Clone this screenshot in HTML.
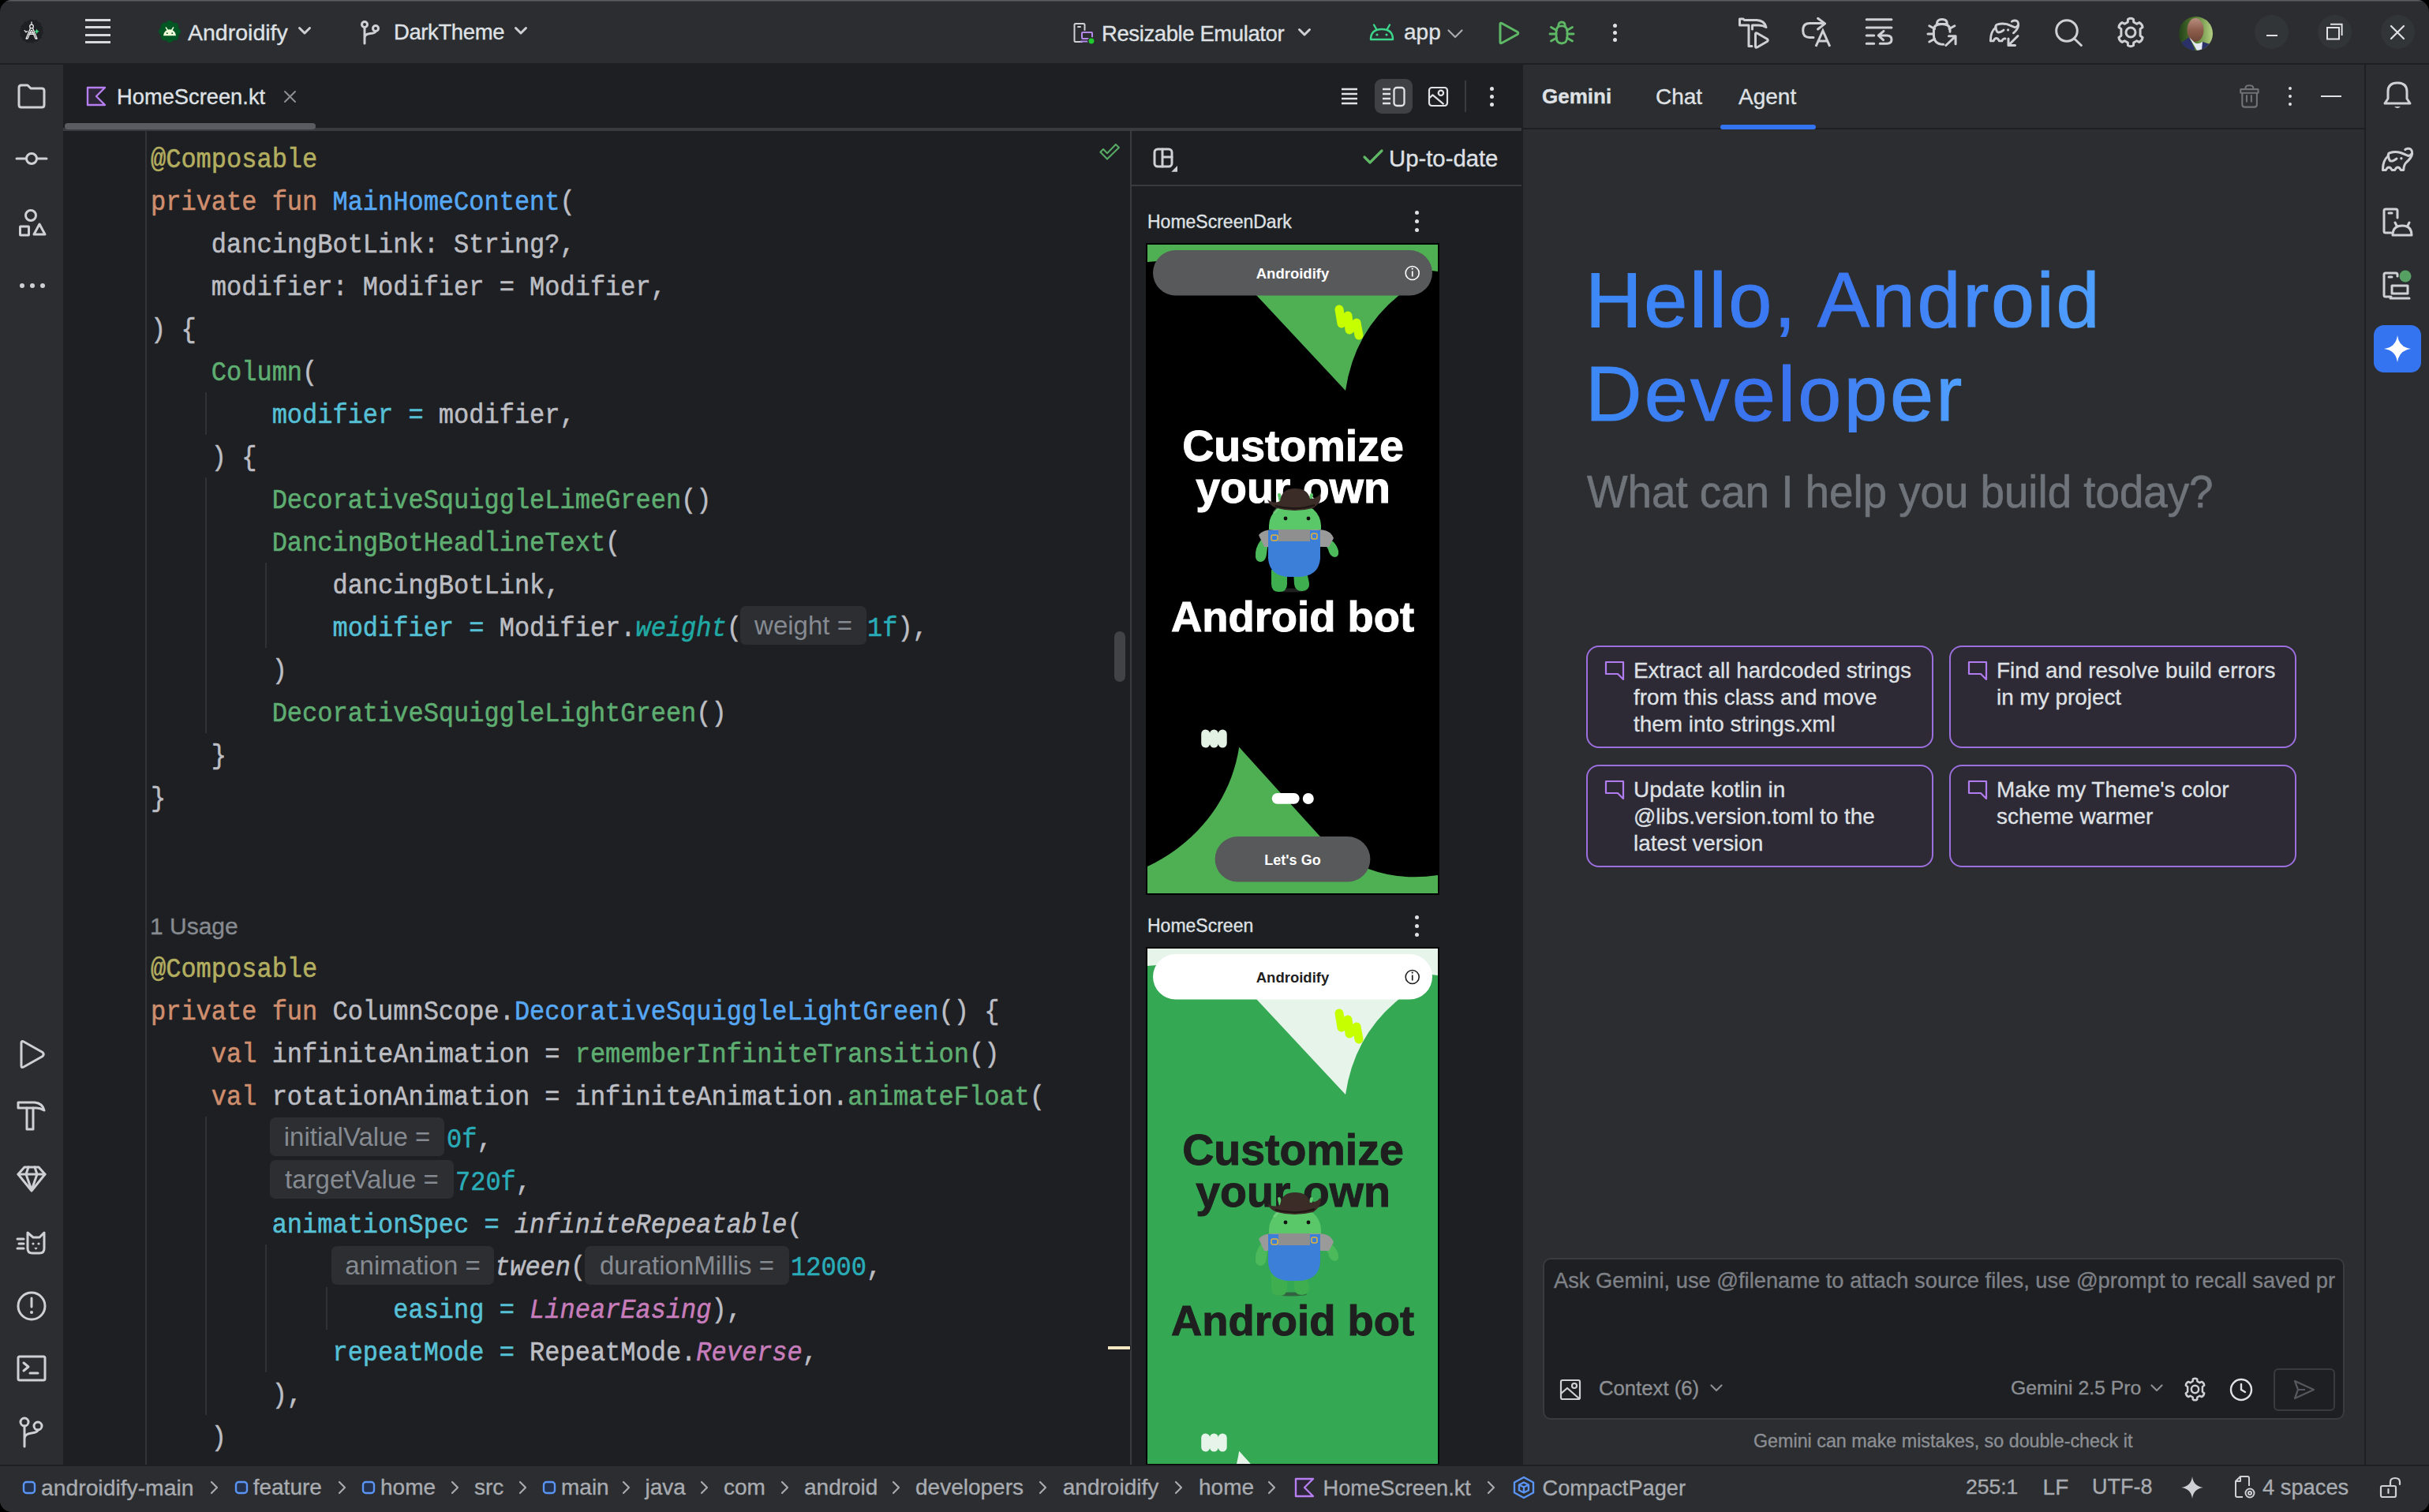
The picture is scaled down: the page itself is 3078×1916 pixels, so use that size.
<!DOCTYPE html>
<html><head><meta charset="utf-8">
<style>
html,body{margin:0;padding:0;background:#000;width:3078px;height:1916px;overflow:hidden}
*{box-sizing:border-box}
.win{position:absolute;left:0;top:0;width:3078px;height:1916px;border-radius:15px;overflow:hidden;background:#2B2D30;font-family:"Liberation Sans",sans-serif;color:#DFE1E5}
.a{position:absolute}
.t{position:absolute;white-space:pre;line-height:1;-webkit-text-stroke:0.35px currentColor}
svg{position:absolute;overflow:visible}
.ic{fill:none;stroke:#CED0D6;stroke-width:3;stroke-linecap:round;stroke-linejoin:round}
.code{position:absolute;left:191px;top:0;font-family:"Liberation Mono",monospace;font-size:32px;color:#BCBEC4;white-space:pre}
.ln{position:absolute;left:0;height:54px;line-height:54px;transform:translateY(4px) scaleY(1.12);transform-origin:0 34px;-webkit-text-stroke:0.5px currentColor}
.an{color:#B3AE60}.kw{color:#CF8E6D}.fd{color:#56A8F5}.cc{color:#5EAE72}.na{color:#56C1D6}.nu{color:#2AACB8}.ex{color:#20A9A4;font-style:italic}.it{font-style:italic}.pk{color:#C77DBB;font-style:italic}
.hint{position:absolute;height:49px;border-radius:7px;background:#2C2E32;color:#868A91;font-family:"Liberation Sans",sans-serif;font-size:33px;line-height:49px;text-align:center;white-space:pre}
.guide{position:absolute;width:2px;background:#2F3134}
</style></head><body>
<div class="win">
<!-- top border highlight -->
<div class="a" style="left:0;top:0;width:3078px;height:1px;background:#5C5D60"></div><div class="a" style="left:0;top:1px;width:3078px;height:1px;background:#46474B"></div>

<!-- ================= TITLE BAR ================= -->
<!-- app icon -->
<svg style="left:24px;top:24px" width="32" height="32" viewBox="0 0 32 32"><path d="M16 0.5 L19 1.6 L22.5 1.3 L24.5 4 L27.7 5.2 L28.3 8.6 L30.6 11.2 L29.8 14.5 L31 17.8 L29 20.5 L28.8 24 L25.7 25.5 L23.8 28.4 L20.3 28.6 L17.4 30.8 L14.2 29.8 L10.8 30.6 L8.4 28.2 L5 27.3 L4 24 L1.5 21.6 L2 18.2 L0.6 15 L2.5 12.2 L2.5 8.7 L5.4 6.9 L6.9 3.8 L10.3 3.3 L13 1 Z" fill="#1F2023"/><g fill="none" stroke="#ECECEC" stroke-width="1.3" stroke-linejoin="round" stroke-linecap="round"><path d="M16 4 L16 7"/><circle cx="16" cy="9.5" r="2.3"/><path d="M14.6 11.6 L9 25 L11 25 L15.5 14.5 M17.4 11.6 L23 25 L21 25 L16.5 14.5"/><path d="M13.6 17.6 L18.4 17.6 M13 19.4 L19 19.4"/><path d="M7.2 14.6 L9 16.8 L10.6 15.6"/></g><path d="M22.6 12.5 L23.6 14.8 L25.9 15.8 L23.6 16.8 L22.6 19.2 L21.6 16.8 L19.3 15.8 L21.6 14.8 Z" fill="#3DDC84"/></svg>
<!-- hamburger -->
<div class="a" style="left:108px;top:24px;width:32px;height:3px;background:#D6D8DC"></div>
<div class="a" style="left:108px;top:33px;width:32px;height:3px;background:#D6D8DC"></div>
<div class="a" style="left:108px;top:43px;width:32px;height:3px;background:#D6D8DC"></div>
<div class="a" style="left:108px;top:52px;width:32px;height:3px;background:#D6D8DC"></div>
<!-- project icon -->
<svg style="left:201px;top:25.5px" width="28" height="28" viewBox="0 0 28 28"><g fill="#025623"><circle cx="14" cy="14" r="11.3"/><circle cx="14.00" cy="4.70" r="4.7"/><circle cx="20.58" cy="7.42" r="4.7"/><circle cx="23.30" cy="14.00" r="4.7"/><circle cx="20.58" cy="20.58" r="4.7"/><circle cx="14.00" cy="23.30" r="4.7"/><circle cx="7.42" cy="20.58" r="4.7"/><circle cx="4.70" cy="14.00" r="4.7"/><circle cx="7.42" cy="7.42" r="4.7"/></g><path d="M6 19.3 A8 8 0 0 1 22 19.3 Z" fill="#EEFBD8"/><path d="M9.4 9 L11.4 12.4 M18.6 9 L16.6 12.4" stroke="#EEFBD8" stroke-width="1.5" stroke-linecap="round"/><circle cx="10.8" cy="16.2" r="0.9" fill="#025623"/><circle cx="17.2" cy="16.2" r="0.9" fill="#025623"/></svg>
<div class="t" style="left:238px;top:26.5px;font-size:28.5px;color:#DFE1E5">Androidify</div>
<svg style="left:378px;top:34px" width="16" height="10" viewBox="0 0 16 10"><path d="M1.5 1.5 L8 8 L14.5 1.5" class="ic" stroke-width="2.2"/></svg>
<!-- branch icon -->
<svg style="left:457px;top:26px" width="24" height="30" viewBox="0 0 24 30"><g class="ic" stroke-width="2.2"><circle cx="5" cy="5" r="3.5"/><circle cx="19" cy="10" r="3.5"/><path d="M5 8.5 L5 29 M5 22 Q5 17 12 16.5 Q19 16 19 13.5"/></g></svg>
<div class="t" style="left:499px;top:27px;font-size:27.5px;letter-spacing:-0.4px;color:#DFE1E5">DarkTheme</div>
<svg style="left:652px;top:34px" width="16" height="10" viewBox="0 0 16 10"><path d="M1.5 1.5 L8 8 L14.5 1.5" class="ic" stroke-width="2.2"/></svg>

<!-- device selector -->
<svg style="left:1360px;top:28px" width="28" height="30" viewBox="0 0 28 30"><g fill="none" stroke="#CED0D6" stroke-width="2" stroke-linecap="round" stroke-linejoin="round"><path d="M11 25 L3 25 Q1.5 25 1.5 23.5 L1.5 3.5 Q1.5 2 3 2 L13 2 Q14.5 2 14.5 3.5 L14.5 10"/><path d="M6 6 L9 6"/></g><g fill="none" stroke="#B589EC" stroke-width="2" stroke-linejoin="round"><rect x="11" y="13" width="13" height="8" rx="1"/><path d="M9 24.5 L26 24.5"/></g><circle cx="23" cy="24" r="4.2" fill="#1FCB2E" stroke="#2B2D30" stroke-width="1.5"/></svg>
<div class="t" style="left:1396px;top:28.5px;font-size:27.5px;letter-spacing:-0.4px;color:#DFE1E5">Resizable Emulator</div>
<svg style="left:1645px;top:36px" width="16" height="10" viewBox="0 0 16 10"><path d="M1.5 1.5 L8 8 L14.5 1.5" class="ic" stroke-width="2.2"/></svg>
<svg style="left:1735px;top:30px" width="32" height="22" viewBox="0 0 32 22"><g fill="none" stroke="#3DD68C" stroke-width="2.4" stroke-linecap="round" stroke-linejoin="round"><path d="M2 20 Q2 7 16 7 Q30 7 30 20 Z"/><path d="M6 1.5 L9.5 7.5 M26 1.5 L22.5 7.5"/></g><circle cx="10" cy="14" r="1.6" fill="#3DD68C"/><circle cx="22" cy="14" r="1.6" fill="#3DD68C"/></svg>
<div class="t" style="left:1779px;top:27px;font-size:28px;color:#DFE1E5">app</div>
<svg style="left:1834px;top:37px" width="20" height="12" viewBox="0 0 20 12"><path d="M1.5 1.5 L10 10 L18.5 1.5" fill="none" stroke="#A8ABB0" stroke-width="2.2" stroke-linecap="round" stroke-linejoin="round"/></svg>
<!-- run -->
<svg style="left:1898px;top:27px" width="28" height="30" viewBox="0 0 28 30"><path d="M3 3.5 Q3 1.5 5 2.5 L25 13.5 Q26.5 15 25 16.5 L5 27.5 Q3 28.5 3 26.5 Z" fill="none" stroke="#5FB865" stroke-width="3" stroke-linejoin="round"/></svg>
<!-- debug -->
<svg style="left:1962px;top:26px" width="34" height="32" viewBox="0 0 34 32"><g fill="none" stroke="#5FB865" stroke-width="2.8" stroke-linecap="round" stroke-linejoin="round"><path d="M12.8 6.8 Q12.8 2 17 2 Q21.2 2 21.2 6.8"/><path d="M10 14 Q10 6.8 17 6.8 Q24 6.8 24 14 L24 20 Q24 29 17 29 Q10 29 10 20 Z"/><path d="M10 17 L2 17 M24 17 L32 17 M10.5 12.5 L3.5 8.5 M23.5 12.5 L30.5 8.5 M10.5 22 L3.5 26 M23.5 22 L30.5 26"/></g></svg>
<!-- more -->
<div class="a" style="left:2043.5px;top:29.5px;width:5px;height:5px;border-radius:50%;background:#DFE1E5"></div>
<div class="a" style="left:2043.5px;top:38.5px;width:5px;height:5px;border-radius:50%;background:#DFE1E5"></div>
<div class="a" style="left:2043.5px;top:47.5px;width:5px;height:5px;border-radius:50%;background:#DFE1E5"></div>

<!-- right icons -->
<svg style="left:2203px;top:22px" width="40" height="40" viewBox="0 0 40 40"><g class="ic" stroke-width="3.2"><path d="M13 10 L1.5 10 L1.5 2 L6 2 L7.5 3.5 L23 3.5 Q33 4 35 12.5 Q30 9.5 24 10 L17.5 10 L17.5 15 M13 10 L13 36.5 L17 36.5"/><path d="M21.5 21 Q21.5 19 23.5 20 L36.5 27.5 Q38 29 36.5 30.5 L23.5 38 Q21.5 39 21.5 37 Z"/></g></svg>
<svg style="left:2283px;top:22px" width="40" height="40" viewBox="0 0 40 40"><g class="ic" stroke-width="3.2"><path d="M15 25.4 L10 25.4 Q1.7 25.4 1.7 16.4 Q1.7 7.4 10 7.4 L29 7.4 M20.6 1.3 L29.6 7.9 L20.6 15"/><path d="M18 36.8 L26.9 16.9 L35.8 36.8 M21 30 L32.8 30" stroke-linecap="butt" stroke-linejoin="miter"/></g></svg>
<svg style="left:2363px;top:22px" width="40" height="40" viewBox="0 0 40 40"><g class="ic" stroke-width="3.2"><path d="M2.2 2.7 L33.9 2.7 M2.2 13 L33.9 13 M2.2 23 L11.7 23 M2.2 33.3 L11.7 33.3"/><path d="M19.2 33.3 L28 33.3 Q34 33.3 34 28 Q34 23 28 23 L17.3 23 M24 17.4 L17.3 23 L23.5 28.7"/></g></svg>
<svg style="left:2441px;top:22px" width="40" height="40" viewBox="0 0 40 40"><g class="ic" stroke-width="3.2"><path d="M13.3 8.4 Q13.3 2.6 19.9 2.6 Q26.4 2.6 26.4 8.4 Z"/><path d="M21.7 34.3 Q9.4 34.3 9.4 22 L9.4 16 Q9.4 8.4 19.9 8.4 Q30 8.4 30 16 L30 18.3"/><path d="M3.8 10.8 L10.6 14.5 M2 21 L8.8 21 M3.8 31 L10.6 27.3 M29.1 14.5 L35.9 10.8"/><path d="M24.8 35.5 L37.1 23.8 M28.5 23.8 L37.1 23.8 L37.1 33.7"/></g></svg>
<svg style="left:2520px;top:18px" width="42" height="44" viewBox="0 0 42 44"><g class="ic" stroke-width="3.3" transform="translate(1,2) scale(0.95)"><path d="M1.6 33.5 L5.4 33.5 Q7 30 9.2 30 Q11.4 30 13 33.5 L16.7 33.5 Q18.3 30 21 30.5"/><path d="M29.8 7.6 Q31 6.5 33.6 6.3 Q39 6 38.6 13 Q38 18 32 23"/><path d="M1.6 33.5 Q1 22 8.3 15.5 Q8 12 11 11.5 Q17 9.5 24 11.5 Q29 13.5 33.5 15.3 Q36 15.8 37.8 13"/><path d="M8.3 14.5 Q9 20 10.5 21.5 Q13 23.5 19 19"/></g><circle cx="24.6" cy="19.9" r="1.6" fill="#CED0D6"/><g class="ic" stroke-width="3.2"><path d="M25 39.5 L37 27.5 M25 31 L25 39.5 L33.5 39.5"/></g></svg>
<svg style="left:2603px;top:23px" width="40" height="40" viewBox="0 0 40 40"><g class="ic" stroke-width="3.2"><circle cx="16" cy="16" r="13.3"/><path d="M25.5 26 L34.4 34.5"/></g></svg>
<svg style="left:2680px;top:21px" width="40" height="40" viewBox="0 0 40 40"><g class="ic" stroke-width="3.2"><path d="M23.7 7 L23.5 3.4 Q20 1 16.5 3.4 L16.3 7 L12.3 9.3 L9.1 7.6 Q5.3 9.4 4.9 13.6 L7.9 15.7 L7.9 24.3 L4.9 26.4 Q5.3 30.6 9.1 32.4 L12.3 30.7 L16.3 33 L16.5 36.6 Q20 39 23.5 36.6 L23.7 33 L27.7 30.7 L30.9 32.4 Q34.7 30.6 35.1 26.4 L32.1 24.3 L32.1 15.7 L35.1 13.6 Q34.7 9.4 30.9 7.6 L27.7 9.3 Z"/><circle cx="20" cy="20" r="6"/></g></svg>
<!-- avatar -->
<svg style="left:2761px;top:21px" width="43" height="43" viewBox="0 0 43 43"><defs><clipPath id="avc"><circle cx="21.5" cy="21.5" r="21.5"/></clipPath><linearGradient id="avbg" x1="0" x2="1"><stop offset="0" stop-color="#24401A"/><stop offset="0.45" stop-color="#4F7A2E"/><stop offset="1" stop-color="#B5D083"/></linearGradient><linearGradient id="avface" x1="0" y1="0" x2="0" y2="1"><stop offset="0" stop-color="#B88E80"/><stop offset="0.5" stop-color="#8E5E4C"/><stop offset="1" stop-color="#6E4536"/></linearGradient></defs><g clip-path="url(#avc)"><rect x="0" y="0" width="43" height="43" fill="url(#avbg)"/><ellipse cx="21" cy="17" rx="10.5" ry="15" fill="url(#avface)"/><path d="M0 35 Q8 30 13 26 L21 43 L0 43 Z" fill="#2B3068"/><path d="M30 32 L43 36 L43 43 L25 43 Z" fill="#2B3068"/><path d="M13 26 L23 43 L29 43 L30 32 Q24 36 20 33 Z" fill="#E4E8F2"/></g></svg>
<!-- window buttons -->
<div class="a" style="left:2857px;top:19px;width:43px;height:43px;border-radius:50%;background:#323537"></div>
<div class="a" style="left:2872px;top:44px;width:14px;height:2px;background:#DFE1E5"></div>
<div class="a" style="left:2937px;top:19px;width:43px;height:43px;border-radius:50%;background:#323537"></div>
<svg style="left:2947px;top:29px" width="24" height="24" viewBox="0 0 24 24"><g fill="none" stroke="#DFE1E5" stroke-width="2"><rect x="2" y="6" width="15" height="14.5"/><path d="M6 1.8 L20.6 1.8 L20.6 16"/></g></svg>
<div class="a" style="left:3017px;top:19px;width:43px;height:43px;border-radius:50%;background:#323537"></div>
<svg style="left:3027px;top:30px" width="22" height="22" viewBox="0 0 22 22"><path d="M3 3 L19 19 M19 3 L3 19" stroke="#DFE1E5" stroke-width="2.2" stroke-linecap="round"/></svg>


<!-- ================= LEFT TOOLBAR ================= -->
<div class="a" style="left:0;top:82px;width:80px;height:1775px;background:#2B2D30"></div>
<!-- folder -->
<svg style="left:20px;top:102px" width="40" height="40" viewBox="0 0 40 40"><path d="M4 9 Q4 6 7 6 L15 6 L19 10 L33 10 Q36 10 36 13 L36 31 Q36 34 33 34 L7 34 Q4 34 4 31 Z" class="ic" stroke-width="3"/></svg>
<!-- commit -->
<svg style="left:20px;top:181px" width="40" height="40" viewBox="0 0 40 40"><g class="ic" stroke-width="3"><circle cx="20" cy="20" r="6.5"/><path d="M1 20 L13.5 20 M26.5 20 L39 20"/></g></svg>
<!-- structure -->
<svg style="left:21px;top:264px" width="40" height="40" viewBox="0 0 40 40"><g class="ic" stroke-width="3"><circle cx="18" cy="9" r="6.5"/><rect x="4.5" y="23" width="11" height="11" rx="0.5"/><path d="M29 20 L36 33 L22 33 Z"/></g></svg>
<!-- more -->
<div class="a" style="left:24.5px;top:359px;width:6px;height:6px;border-radius:50%;background:#CED0D6"></div>
<div class="a" style="left:37.5px;top:359px;width:6px;height:6px;border-radius:50%;background:#CED0D6"></div>
<div class="a" style="left:50.5px;top:359px;width:6px;height:6px;border-radius:50%;background:#CED0D6"></div>
<!-- bottom icons -->
<svg style="left:20px;top:1316px" width="40" height="40" viewBox="0 0 40 40"><path d="M7 5.5 Q7 2.5 10 4 L34 17.5 Q36.5 20 34 22.5 L10 36 Q7 37.5 7 34.5 Z" class="ic" stroke-width="3"/></svg>
<svg style="left:20px;top:1395px" width="40" height="40" viewBox="0 0 40 40"><g class="ic" stroke-width="3"><path d="M3 2 L24 2 Q34 3 36 12 Q31 9 26 9 L3 9 Z"/><path d="M14 9 L14 36 L22 36 L22 9"/></g></svg>
<svg style="left:20px;top:1474px" width="40" height="40" viewBox="0 0 40 40"><g class="ic" stroke-width="3"><path d="M11 5 L29 5 L37 14 L20 35 L3 14 Z"/><path d="M3 14 L37 14 M13 14 L20 34 L27 14 M13 14 L16 5 M27 14 L24 5"/></g></svg>
<svg style="left:20px;top:1556px" width="40" height="40" viewBox="0 0 40 40"><g class="ic" stroke-width="3"><path d="M15 6 L22 12 L30 12 L36 6 L36 26 Q36 32 30 32 L21 32 Q15 32 15 26 Z"/><path d="M2 14 L10 14 M4 20 L10 20 M2 26 L10 26"/></g><circle cx="22" cy="20" r="1.6" fill="#CED0D6"/><circle cx="29" cy="20" r="1.6" fill="#CED0D6"/><path d="M24 25 L25.5 26.5 L27 25" stroke="#CED0D6" stroke-width="1.6" fill="none"/></svg>
<svg style="left:20px;top:1635px" width="40" height="40" viewBox="0 0 40 40"><g class="ic" stroke-width="3"><circle cx="20" cy="20" r="17"/><path d="M20 10 L20 21"/></g><circle cx="20" cy="28" r="2" fill="#CED0D6"/></svg>
<svg style="left:20px;top:1715px" width="40" height="40" viewBox="0 0 40 40"><g class="ic" stroke-width="3"><rect x="3" y="4" width="34" height="30" rx="2"/><path d="M10 12 L16 17 L10 22 M18 25 L28 25"/></g></svg>
<svg style="left:20px;top:1795px" width="40" height="40" viewBox="0 0 40 40"><g class="ic" stroke-width="3"><circle cx="11" cy="7" r="5"/><circle cx="28" cy="12" r="5"/><path d="M11 12 L11 38 M11 28 Q11 22 20 21 Q28 20 28 17"/></g></svg>


<!-- ================= EDITOR ================= -->
<div class="a" style="left:80px;top:82px;width:1850px;height:1775px;background:#1E1F22"></div>
<div class="a" style="left:80px;top:162px;width:1848px;height:4px;background:#393B40"></div>
<div class="a" style="left:82px;top:156px;width:318px;height:8px;border-radius:4px;background:#5A5C62"></div>
<svg style="left:109px;top:109px" width="26" height="26" viewBox="0 0 26 26"><path d="M2 2 L24 2 L13 13 L24 24 L2 24 Z" fill="#2D2638" stroke="#B67EF0" stroke-width="2.4" stroke-linejoin="round"/></svg>
<div class="t" style="left:148px;top:109px;font-size:27.3px;color:#DFE1E5">HomeScreen.kt</div>
<svg style="left:359px;top:114px" width="17" height="17" viewBox="0 0 17 17"><path d="M2 2 L15 15 M15 2 L2 15" stroke="#8C8F94" stroke-width="2" stroke-linecap="round"/></svg>
<!-- toolbar right in tab bar -->
<svg style="left:1690px;top:100px" width="40" height="40" viewBox="0 0 40 40"><path d="M10 13 L30 13 M10 19 L30 19 M10 25 L30 25 M10 31 L30 31" stroke="#DFE1E5" stroke-width="2.3"/></svg>
<div class="a" style="left:1742px;top:100px;width:48px;height:44px;border-radius:9px;background:#404144"></div>
<svg style="left:1742px;top:100px" width="48" height="44" viewBox="0 0 48 44"><g stroke="#DFE1E5" stroke-width="2.3" fill="none"><path d="M10 13 L20 13 M10 19 L20 19 M10 25 L20 25 M10 31 L20 31"/><rect x="24.5" y="11" width="13" height="23" rx="3.5"/></g></svg>
<svg style="left:1802px;top:102px" width="40" height="40" viewBox="0 0 40 40"><g fill="none" stroke="#DFE1E5" stroke-width="2.2" stroke-linejoin="round"><rect x="9" y="9" width="23" height="23" rx="3.5"/><path d="M9.5 22 L13.5 18.4 L27.5 30.1"/><circle cx="23.9" cy="15.8" r="3.2"/></g></svg>
<div class="a" style="left:1856px;top:102px;width:2px;height:40px;background:#393B40"></div>
<div class="a" style="left:1887.5px;top:109.5px;width:5px;height:5px;border-radius:50%;background:#DFE1E5"></div>
<div class="a" style="left:1887.5px;top:119.5px;width:5px;height:5px;border-radius:50%;background:#DFE1E5"></div>
<div class="a" style="left:1887.5px;top:129.5px;width:5px;height:5px;border-radius:50%;background:#DFE1E5"></div>


<div class="a" style="left:184px;top:166px;width:2px;height:1691px;background:#313337"></div>
<div class="a" style="left:1432px;top:166px;width:2px;height:1691px;background:#393B40"></div>
<div class="code">
<div class="ln" style="top:173px"><span class="an">@Composable</span></div>
<div class="ln" style="top:227px"><span class="kw">private fun </span><span class="fd">MainHomeContent</span>(</div>
<div class="ln" style="top:281px">    dancingBotLink: String?,</div>
<div class="ln" style="top:335px">    modifier: Modifier = Modifier,</div>
<div class="ln" style="top:389px">) {</div>
<div class="ln" style="top:443px">    <span class="cc">Column</span>(</div>
<div class="ln" style="top:497px">        <span class="na">modifier =</span> modifier,</div>
<div class="ln" style="top:551px">    ) {</div>
<div class="ln" style="top:605px">        <span class="cc">DecorativeSquiggleLimeGreen</span>()</div>
<div class="ln" style="top:659px">        <span class="cc">DancingBotHeadlineText</span>(</div>
<div class="ln" style="top:713px">            dancingBotLink,</div>
<div class="ln" style="top:767px">            <span class="na">modifier =</span> Modifier.<span class="ex">weight</span>(</div>
<div class="ln" style="top:821px">        )</div>
<div class="ln" style="top:875px">        <span class="cc">DecorativeSquiggleLightGreen</span>()</div>
<div class="ln" style="top:929px">    }</div>
<div class="ln" style="top:983px">}</div>
<div class="ln" style="top:1199px"><span class="an">@Composable</span></div>
<div class="ln" style="top:1253px"><span class="kw">private fun </span>ColumnScope.<span class="fd">DecorativeSquiggleLightGreen</span>() {</div>
<div class="ln" style="top:1307px">    <span class="kw">val </span>infiniteAnimation = <span class="cc">rememberInfiniteTransition</span>()</div>
<div class="ln" style="top:1361px">    <span class="kw">val </span>rotationAnimation = infiniteAnimation.<span class="cc">animateFloat</span>(</div>
<div class="ln" style="top:1415px;left:375px"><span class="nu">0f</span>,</div>
<div class="ln" style="top:1469px;left:386px"><span class="nu">720f</span>,</div>
<div class="ln" style="top:1523px">        <span class="na">animationSpec =</span> <span class="it">infiniteRepeatable</span>(</div>
<div class="ln" style="top:1577px;left:436px"><span class="it">tween</span>(</div>
<div class="ln" style="top:1577px;left:811px"><span class="nu">12000</span>,</div>
<div class="ln" style="top:1631px">                <span class="na">easing =</span> <span class="pk">LinearEasing</span>),</div>
<div class="ln" style="top:1685px">            <span class="na">repeatMode =</span> RepeatMode.<span class="pk">Reverse</span>,</div>
<div class="ln" style="top:1739px">        ),</div>
<div class="ln" style="top:1793px">    )</div>
</div>
<div class="ln code" style="top:767px;left:1099px"><span class="nu">1f</span>),</div>
<div class="t" style="left:190px;top:1159px;font-size:30px;color:#868A91">1 Usage</div>
<div class="hint" style="left:938px;top:768px;width:160px">weight =</div>
<div class="hint" style="left:342px;top:1416px;width:221px">initialValue =</div>
<div class="hint" style="left:342px;top:1470px;width:233px">targetValue =</div>
<div class="hint" style="left:420px;top:1579px;width:206px">animation =</div>
<div class="hint" style="left:741px;top:1579px;width:259px">durationMillis =</div>
<div class="guide" style="left:260px;top:497px;height:54px"></div>
<div class="guide" style="left:260px;top:605px;height:324px"></div>
<div class="guide" style="left:336px;top:713px;height:108px"></div>
<div class="guide" style="left:260px;top:1415px;height:378px"></div>
<div class="guide" style="left:336px;top:1577px;height:162px"></div>
<div class="guide" style="left:413px;top:1631px;height:54px"></div>
<div class="a" style="left:1412px;top:800px;width:14px;height:64px;border-radius:7px;background:#424347"></div>
<div class="a" style="left:1403px;top:1705px;width:30px;height:6px;background:#1a1a1a"></div>
<div class="a" style="left:1404px;top:1706px;width:28px;height:4px;background:#F5E6C3"></div>
<svg style="left:1390px;top:178px" width="34" height="30" viewBox="0 0 34 30"><path d="M4.4 14.7 L8.1 11 L13 16.2 L23.9 5.1 L27.9 9 L13 23.6 Z" fill="none" stroke="#57A864" stroke-width="2.1" stroke-linejoin="round"/></svg>


<!-- ================= PREVIEW ================= -->

<!--PREVIEW_START-->
<!-- preview toolbar -->
<svg style="left:1460px;top:185px" width="36" height="36" viewBox="0 0 36 36"><g class="ic" stroke-width="2.2"><rect x="3" y="4" width="22" height="22" rx="4"/><path d="M13 4 L13 26 M13 14 L25 14"/></g><path d="M24.3 32.7 L32 32.7 L32 25 Z" fill="#CED0D6"/></svg>
<svg style="left:1727px;top:188px" width="26" height="22" viewBox="0 0 26 22"><path d="M2 11 L9 18 L24 3" fill="none" stroke="#5FB865" stroke-width="3.2" stroke-linecap="round" stroke-linejoin="round"/></svg>
<div class="t" style="left:1760px;top:186px;font-size:29.3px;color:#DFE1E5">Up-to-date</div>
<div class="a" style="left:1434px;top:234px;width:494px;height:2px;background:#393B40"></div>
<div class="t" style="left:1454px;top:270px;font-size:23px;color:#DFE1E5">HomeScreenDark</div>
<div class="a" style="left:1793px;top:267px;width:5px;height:5px;border-radius:50%;background:#DFE1E5"></div>
<div class="a" style="left:1793px;top:278px;width:5px;height:5px;border-radius:50%;background:#DFE1E5"></div>
<div class="a" style="left:1793px;top:289px;width:5px;height:5px;border-radius:50%;background:#DFE1E5"></div>
<div class="a" style="left:1452px;top:308px;width:372px;height:826px;background:#000"></div>
<div class="a" style="left:1454px;top:310px;width:368px;height:822px"><svg width="368" height="822" viewBox="0 0 368 822" style="position:absolute;left:0;top:0">
<defs><clipPath id="c1"><rect x="0" y="0" width="368" height="822"/></clipPath></defs>
<g clip-path="url(#c1)">
<rect x="0" y="0" width="368" height="822" fill="#000000"/>
<path d="M0 0 L368 0 L368 34 Q200 14 70 18 Q30 19 0 22 Z" fill="#4FAF53"/>
<path d="M110 34 L319 34 L319 64 Q262 110 251 185 Z" fill="#4FAF53"/>
<path d="M243 82 L246 100 L254 90 L256 108 L265 99 L268 115" fill="none" stroke="#C6FF00" stroke-width="11" stroke-linecap="round" stroke-linejoin="round"/>
<path d="M73.7 620 L73.7 632 M84.4 620 L84.4 632 M95.2 620 L95.2 632" stroke="#E3F1E5" stroke-width="11" stroke-linecap="round"/>
<path d="M0 788 C48 766 104 716 116.2 636.8 L218.4 749.6 L280 791 Q320 806 368 799 L368 822 L0 822 Z" fill="#4FAF53"/>
<rect x="7" y="7" width="354" height="57.5" rx="28.75" fill="#58595B"/>
<text x="184" y="42.5" text-anchor="middle" font-family="Liberation Sans" font-weight="700" font-size="18.5" fill="#FFFFFF">Androidify</text>
<circle cx="335.7" cy="36" r="8.5" fill="none" stroke="#FFFFFF" stroke-width="1.6"/>
<rect x="334.9" y="33.5" width="1.7" height="7" fill="#FFFFFF"/><circle cx="335.7" cy="30.6" r="1.1" fill="#FFFFFF"/>
<text x="184.5" y="273.5" text-anchor="middle" font-family="Liberation Sans" font-weight="700" font-size="55.5" fill="#FFFFFF" stroke="#FFFFFF" stroke-width="1">Customize</text>
<text x="184.5" y="327" text-anchor="middle" font-family="Liberation Sans" font-weight="700" font-size="55.5" fill="#FFFFFF" stroke="#FFFFFF" stroke-width="1">your own</text>
<text x="184" y="489.8" text-anchor="middle" font-family="Liberation Sans" font-weight="700" font-size="54.4" fill="#FFFFFF" stroke="#FFFFFF" stroke-width="1">Android bot</text>
<g transform="translate(0,0)">
<ellipse cx="182" cy="438" rx="20" ry="2.5" fill="#333" opacity="0.6"/>
<path d="M157 412 L157 430 Q157 440 167 440 Q177 440 177 430 L177 412 Z" fill="#3FAE4E"/>
<path d="M185 412 L186 430 Q187 439 196 439 Q206 438 205 429 L201 410 Z" fill="#3FAE4E"/>
<path d="M144 374 Q136 384 137 396 Q138 402 144 402 Q150 401 151 392 L153 376 Z" fill="#4CB95B"/>
<path d="M226 372 Q238 374 242 388 Q243 396 237 396 Q231 395 229 386 L222 374 Z" fill="#4CB95B"/>
<path d="M141 368 Q146 361 160 361 L216 361 Q232 361 236 372 L230 383 L148 383 Z" fill="#9A9A9A"/>
<path d="M153 362 L153 398 Q155 421 181 421 L190 421 Q217 421 219 398 L219 362 Z" fill="#3B7FD9"/>
<rect x="166" y="361" width="40" height="15" fill="#8F8F8F"/>
<path d="M154 361 L154 356 A33 29 0 0 1 220 356 L220 361 Z" fill="#5AC768"/><path d="M160 340 A30 24 0 0 1 200 330" stroke="#8FE39A" stroke-width="3" fill="none" opacity="0.5"/>
<circle cx="175" cy="347" r="2.4" fill="#111"/><circle cx="204" cy="347" r="2.4" fill="#111"/>
<rect x="157" y="368" width="8" height="7" rx="2" fill="none" stroke="#E5B43A" stroke-width="1.5"/>
<rect x="208" y="366" width="7" height="7" rx="2" fill="none" stroke="#E5B43A" stroke-width="1.5"/>
<path d="M169 326 L167 317 M206 326 L208 317" stroke="#5AC768" stroke-width="4" stroke-linecap="round"/>
<path d="M152 323 Q160 329 168 325 Q170 309 187 309 Q203 309 206 322 Q214 322 219 316 Q222 326 210 334 Q186 340 164 334 Q155 331 152 323 Z" fill="#3B2C27"/>
<path d="M162 331 Q187 338 212 330" stroke="#1E1613" stroke-width="2" fill="none"/>
</g>
<rect x="157.7" y="695" width="35" height="13.7" rx="6.85" fill="#FFFFFF"/>
<circle cx="203.8" cy="702" r="7" fill="#FFFFFF"/>
<rect x="85.6" y="750" width="196.8" height="57.5" rx="28.75" fill="#58595B"/>
<text x="184" y="786" text-anchor="middle" font-family="Liberation Sans" font-weight="700" font-size="18" fill="#FFFFFF">Let's Go</text>
</g></svg></div>
<div class="t" style="left:1454px;top:1162px;font-size:23px;color:#DFE1E5">HomeScreen</div>
<div class="a" style="left:1793px;top:1160px;width:5px;height:5px;border-radius:50%;background:#DFE1E5"></div>
<div class="a" style="left:1793px;top:1171px;width:5px;height:5px;border-radius:50%;background:#DFE1E5"></div>
<div class="a" style="left:1793px;top:1182px;width:5px;height:5px;border-radius:50%;background:#DFE1E5"></div>
<div class="a" style="left:1452px;top:1200px;width:372px;height:657px;background:#000"></div>
<div class="a" style="left:1454px;top:1202px;width:368px;height:653px"><svg width="368" height="653" viewBox="0 0 368 653" style="position:absolute;left:0;top:0">
<defs><clipPath id="c2"><rect x="0" y="0" width="368" height="653"/></clipPath></defs>
<g clip-path="url(#c2)">
<rect x="0" y="0" width="368" height="822" fill="#34A853"/>
<path d="M0 0 L368 0 L368 34 Q200 14 70 18 Q30 19 0 22 Z" fill="#E6F4EA"/>
<path d="M110 34 L319 34 L319 64 Q262 110 251 185 Z" fill="#E6F4EA"/>
<path d="M243 82 L246 100 L254 90 L256 108 L265 99 L268 115" fill="none" stroke="#C6FF00" stroke-width="11" stroke-linecap="round" stroke-linejoin="round"/>
<path d="M73.7 620 L73.7 632 M84.4 620 L84.4 632 M95.2 620 L95.2 632" stroke="#E6F4EA" stroke-width="11" stroke-linecap="round"/>
<path d="M0 788 C48 766 104 716 116.2 636.8 L218.4 749.6 L280 791 Q320 806 368 799 L368 822 L0 822 Z" fill="#E6F4EA"/>
<rect x="7" y="7" width="354" height="57.5" rx="28.75" fill="#FFFFFF"/>
<text x="184" y="42.5" text-anchor="middle" font-family="Liberation Sans" font-weight="700" font-size="18.5" fill="#1F1F1F">Androidify</text>
<circle cx="335.7" cy="36" r="8.5" fill="none" stroke="#1F1F1F" stroke-width="1.6"/>
<rect x="334.9" y="33.5" width="1.7" height="7" fill="#1F1F1F"/><circle cx="335.7" cy="30.6" r="1.1" fill="#1F1F1F"/>
<text x="184.5" y="273.5" text-anchor="middle" font-family="Liberation Sans" font-weight="700" font-size="55.5" fill="#1F1F1F" stroke="#1F1F1F" stroke-width="1">Customize</text>
<text x="184.5" y="327" text-anchor="middle" font-family="Liberation Sans" font-weight="700" font-size="55.5" fill="#1F1F1F" stroke="#1F1F1F" stroke-width="1">your own</text>
<text x="184" y="489.8" text-anchor="middle" font-family="Liberation Sans" font-weight="700" font-size="54.4" fill="#1F1F1F" stroke="#1F1F1F" stroke-width="1">Android bot</text>
<g transform="translate(0,0)">
<ellipse cx="182" cy="438" rx="20" ry="2.5" fill="#333" opacity="0.6"/>
<path d="M157 412 L157 430 Q157 440 167 440 Q177 440 177 430 L177 412 Z" fill="#3FAE4E"/>
<path d="M185 412 L186 430 Q187 439 196 439 Q206 438 205 429 L201 410 Z" fill="#3FAE4E"/>
<path d="M144 374 Q136 384 137 396 Q138 402 144 402 Q150 401 151 392 L153 376 Z" fill="#4CB95B"/>
<path d="M226 372 Q238 374 242 388 Q243 396 237 396 Q231 395 229 386 L222 374 Z" fill="#4CB95B"/>
<path d="M141 368 Q146 361 160 361 L216 361 Q232 361 236 372 L230 383 L148 383 Z" fill="#9A9A9A"/>
<path d="M153 362 L153 398 Q155 421 181 421 L190 421 Q217 421 219 398 L219 362 Z" fill="#3B7FD9"/>
<rect x="166" y="361" width="40" height="15" fill="#8F8F8F"/>
<path d="M154 361 L154 356 A33 29 0 0 1 220 356 L220 361 Z" fill="#5AC768"/><path d="M160 340 A30 24 0 0 1 200 330" stroke="#8FE39A" stroke-width="3" fill="none" opacity="0.5"/>
<circle cx="175" cy="347" r="2.4" fill="#111"/><circle cx="204" cy="347" r="2.4" fill="#111"/>
<rect x="157" y="368" width="8" height="7" rx="2" fill="none" stroke="#E5B43A" stroke-width="1.5"/>
<rect x="208" y="366" width="7" height="7" rx="2" fill="none" stroke="#E5B43A" stroke-width="1.5"/>
<path d="M169 326 L167 317 M206 326 L208 317" stroke="#5AC768" stroke-width="4" stroke-linecap="round"/>
<path d="M152 323 Q160 329 168 325 Q170 309 187 309 Q203 309 206 322 Q214 322 219 316 Q222 326 210 334 Q186 340 164 334 Q155 331 152 323 Z" fill="#3B2C27"/>
<path d="M162 331 Q187 338 212 330" stroke="#1E1613" stroke-width="2" fill="none"/>
</g>
<rect x="157.7" y="695" width="35" height="13.7" rx="6.85" fill="#FFFFFF"/>
<circle cx="203.8" cy="702" r="7" fill="#FFFFFF"/>
<rect x="85.6" y="750" width="196.8" height="57.5" rx="28.75" fill="#FFFFFF"/>
<text x="184" y="786" text-anchor="middle" font-family="Liberation Sans" font-weight="700" font-size="18" fill="#1F1F1F">Let's Go</text>
</g></svg></div>
<!--PREVIEW_END-->
<!-- ================= GEMINI ================= -->
<div class="a" style="left:1930px;top:82px;width:1066px;height:1775px;background:#2B2D30"></div>
<div class="a" style="left:1930px;top:162px;width:1066px;height:2px;background:#1E1F22"></div>
<div class="t" style="left:1954px;top:109px;font-size:26px;font-weight:700;color:#DFE1E5">Gemini</div>
<div class="t" style="left:2098px;top:109px;font-size:28px;color:#DFE1E5">Chat</div>
<div class="t" style="left:2203px;top:109px;font-size:28px;color:#DFE1E5">Agent</div>
<div class="a" style="left:2180px;top:158px;width:121px;height:6px;border-radius:3px;background:#3574F0"></div>
<svg style="left:2835px;top:105px" width="30" height="34" viewBox="0 0 30 34"><g fill="none" stroke="#707275" stroke-width="2.1" stroke-linejoin="round"><rect x="4.2" y="8.1" width="22.4" height="4.6" rx="0.5"/><path d="M10.5 8 L10.5 6.5 Q10.5 3.3 15.3 3.3 Q20.3 3.3 20.3 6.5 L20.3 8"/><path d="M6.3 12.8 L6.3 27.5 Q6.3 30.6 9.5 30.6 L21.7 30.6 Q24.9 30.6 24.9 27.5 L24.9 12.8"/><path d="M12 15.2 L12 24.6 M17.9 15.2 L17.9 24.6"/></g></svg>
<div class="a" style="left:2899.7px;top:109.8px;width:4.4px;height:4.4px;border-radius:50%;background:#DFE1E5"></div>
<div class="a" style="left:2899.7px;top:119.7px;width:4.4px;height:4.4px;border-radius:50%;background:#DFE1E5"></div>
<div class="a" style="left:2899.7px;top:129.8px;width:4.4px;height:4.4px;border-radius:50%;background:#DFE1E5"></div>
<div class="a" style="left:2941px;top:120.8px;width:26px;height:2.3px;background:#DFE1E5"></div>

<div class="t" id="hello1" style="left:2009px;top:330px;font-size:99px;letter-spacing:2.7px;-webkit-text-stroke:1.2px transparent;background:linear-gradient(90deg,#3D8AF7 0%,#3A74F0 45%,#4FA0FF 100%);-webkit-background-clip:text;background-clip:text;color:transparent">Hello, Android</div>
<div class="t" id="hello2" style="left:2009px;top:449px;font-size:99px;letter-spacing:3.25px;-webkit-text-stroke:1.2px transparent;background:linear-gradient(90deg,#3D8AF7 0%,#3A70EE 50%,#4FA0FF 100%);-webkit-background-clip:text;background-clip:text;color:transparent">Developer</div>
<div class="t" style="left:2011px;top:597px;font-size:54.7px;color:#6F737A;transform:scaleY(1.05);transform-origin:0 46.5px;-webkit-text-stroke:0.7px currentColor">What can I help you build today?</div>

<!-- cards -->
<div class="a" style="left:2010px;top:818px;width:440px;height:130px;border-radius:16px;border:2px solid #9B6FDD;background:#2E2A35"></div>
<div class="a" style="left:2470px;top:818px;width:440px;height:130px;border-radius:16px;border:2px solid #9B6FDD;background:#2E2A35"></div>
<div class="a" style="left:2010px;top:969px;width:440px;height:130px;border-radius:16px;border:2px solid #9B6FDD;background:#2E2A35"></div>
<div class="a" style="left:2470px;top:969px;width:440px;height:130px;border-radius:16px;border:2px solid #9B6FDD;background:#2E2A35"></div>
<svg style="left:2033px;top:837px" width="26" height="26" viewBox="0 0 26 26"><path d="M2 2 L24 2 L24 24 L17 17 L2 17 Z" fill="none" stroke="#B07CF0" stroke-width="2.2" stroke-linejoin="round"/></svg>
<svg style="left:2493px;top:837px" width="26" height="26" viewBox="0 0 26 26"><path d="M2 2 L24 2 L24 24 L17 17 L2 17 Z" fill="none" stroke="#B07CF0" stroke-width="2.2" stroke-linejoin="round"/></svg>
<svg style="left:2033px;top:988px" width="26" height="26" viewBox="0 0 26 26"><path d="M2 2 L24 2 L24 24 L17 17 L2 17 Z" fill="none" stroke="#B07CF0" stroke-width="2.2" stroke-linejoin="round"/></svg>
<svg style="left:2493px;top:988px" width="26" height="26" viewBox="0 0 26 26"><path d="M2 2 L24 2 L24 24 L17 17 L2 17 Z" fill="none" stroke="#B07CF0" stroke-width="2.2" stroke-linejoin="round"/></svg>
<div class="a" style="left:2070px;top:833px;font-size:27.9px;line-height:34px;color:#DFE1E5;white-space:pre;-webkit-text-stroke:0.3px currentColor">Extract all hardcoded strings
from this class and move
them into strings.xml</div>
<div class="a" style="left:2530px;top:833px;font-size:27.9px;line-height:34px;color:#DFE1E5;white-space:pre;-webkit-text-stroke:0.3px currentColor">Find and resolve build errors
in my project</div>
<div class="a" style="left:2070px;top:984px;font-size:27.9px;line-height:34px;color:#DFE1E5;white-space:pre;-webkit-text-stroke:0.3px currentColor">Update kotlin in
@libs.version.toml to the
latest version</div>
<div class="a" style="left:2530px;top:984px;font-size:27.9px;line-height:34px;color:#DFE1E5;white-space:pre;-webkit-text-stroke:0.3px currentColor">Make my Theme's color
scheme warmer</div>

<!-- input -->
<div class="a" style="left:1955px;top:1594px;width:1016px;height:205px;border-radius:10px;border:2px solid #393B40;background:#1E1F22"></div>
<div class="t" style="left:1969px;top:1609px;font-size:27.3px;color:#7E8187">Ask Gemini, use @filename to attach source files, use @prompt to recall saved pr</div>
<svg style="left:1975px;top:1746px" width="30" height="30" viewBox="0 0 30 30"><g fill="none" stroke="#CED0D6" stroke-width="2.2" stroke-linejoin="round"><rect x="3" y="3" width="24" height="24" rx="2"/><path d="M3 20 L11 13 L27 27"/><circle cx="20" cy="10" r="3"/></g></svg>
<div class="t" style="left:2026px;top:1747px;font-size:25.7px;color:#8C8F94">Context (6)</div>
<svg style="left:2167px;top:1754px" width="16" height="10" viewBox="0 0 16 10"><path d="M1.5 1.5 L8 8 L14.5 1.5" fill="none" stroke="#8C8F94" stroke-width="2.2" stroke-linecap="round" stroke-linejoin="round"/></svg>
<div class="t" style="left:2548px;top:1747px;font-size:24.8px;color:#8C8F94">Gemini 2.5 Pro</div>
<svg style="left:2725px;top:1754px" width="16" height="10" viewBox="0 0 16 10"><path d="M1.5 1.5 L8 8 L14.5 1.5" fill="none" stroke="#8C8F94" stroke-width="2.2" stroke-linecap="round" stroke-linejoin="round"/></svg>
<svg style="left:2766px;top:1745px" width="31" height="31" viewBox="0 0 40 40"><g fill="none" stroke="#CED0D6" stroke-width="3.2" stroke-linejoin="round"><path d="M23.7 7 L23.5 3.4 Q20 1 16.5 3.4 L16.3 7 L12.3 9.3 L9.1 7.6 Q5.3 9.4 4.9 13.6 L7.9 15.7 L7.9 24.3 L4.9 26.4 Q5.3 30.6 9.1 32.4 L12.3 30.7 L16.3 33 L16.5 36.6 Q20 39 23.5 36.6 L23.7 33 L27.7 30.7 L30.9 32.4 Q34.7 30.6 35.1 26.4 L32.1 24.3 L32.1 15.7 L35.1 13.6 Q34.7 9.4 30.9 7.6 L27.7 9.3 Z"/><circle cx="20" cy="20" r="6"/></g></svg>
<svg style="left:2825px;top:1746px" width="30" height="30" viewBox="0 0 30 30"><g fill="none" stroke="#DFE1E5" stroke-width="2.4" stroke-linecap="round"><circle cx="15" cy="15" r="13"/><path d="M15 8 L15 15 L20 18"/></g></svg>
<div class="a" style="left:2881px;top:1734px;width:78px;height:54px;border-radius:6px;border:2px solid #393B40"></div>
<svg style="left:2905px;top:1747px" width="30" height="28" viewBox="0 0 30 28"><path d="M3 3 L27 14 L3 25 L7 14 Z M7 14 L16 14" fill="none" stroke="#55585E" stroke-width="2.2" stroke-linejoin="round"/></svg>
<div class="t" style="left:2222px;top:1815px;font-size:23.3px;color:#8C8F94">Gemini can make mistakes, so double-check it</div>


<!-- ================= RIGHT TOOLBAR ================= -->
<div class="a" style="left:2996px;top:82px;width:2px;height:1775px;background:#1E1F22"></div>
<svg style="left:3018px;top:101px" width="40" height="40" viewBox="0 0 40 40"><g class="ic" stroke-width="3"><path d="M4 30 L36 30 L32 24 L32 15 Q32 4 20 4 Q8 4 8 15 L8 24 Z"/></g><path d="M16 34 L24 34 Q20 38 16 34Z" fill="#CED0D6"/></svg>
<svg style="left:3018px;top:182px" width="40" height="40" viewBox="0 0 40 40"><g class="ic" stroke-width="3.2"><path d="M1.6 33.5 L5.4 33.5 Q7 30 9.2 30 Q11.4 30 13 33.5 L16.7 33.5 Q18.3 30 20.5 30 Q22.7 30 24.3 33.5 L27.8 33.5 Q28 27 31 24 Q38 18 38.6 13 Q39 6 33.6 6.3 Q31 6.5 29.8 7.6"/><path d="M1.6 33.5 Q1 22 8.3 15.5 Q8 12 11 11.5 Q17 9.5 24 11.5 Q29 13.5 33.5 15.3 Q36 15.8 37.8 13"/><path d="M8.3 14.5 Q9 20 10.5 21.5 Q13 23.5 19 19"/></g><circle cx="24.9" cy="18.8" r="1.7" fill="#CED0D6"/></svg>
<svg style="left:3018px;top:262px" width="40" height="40" viewBox="0 0 40 40"><g class="ic" stroke-width="3"><path d="M12 33 L5 33 Q3 33 3 31 L3 5 Q3 3 5 3 L18 3 Q20 3 20 5 L20 14"/><path d="M9 8 L13 8"/><path d="M14 36 Q14 24 26 24 Q38 24 38 36 Z"/><path d="M17 20 L19 24 M35 20 L33 24"/></g></svg>
<svg style="left:3018px;top:342px" width="40" height="40" viewBox="0 0 40 40"><g class="ic" stroke-width="3"><path d="M12 34 L5 34 Q3 34 3 32 L3 6 Q3 4 5 4 L18 4 Q20 4 20 6 L20 8"/><path d="M9 9 L13 9"/><rect x="13" y="20" width="20" height="10"/><path d="M11 36 L35 36"/></g><circle cx="30" cy="8" r="7.5" fill="#57A064"/></svg>
<div class="a" style="left:3008px;top:412px;width:60px;height:60px;border-radius:13px;background:#3574F0"></div>
<svg style="left:3018px;top:422px" width="40" height="40" viewBox="0 0 40 40"><path d="M20 3 Q22 18 37 20 Q22 22 20 37 Q18 22 3 20 Q18 18 20 3 Z" fill="#FFFFFF"/></svg>


<!-- ================= STATUS BAR ================= -->
<div class="a" style="left:0;top:80px;width:3078px;height:2px;background:#1E1F22"></div>
<div class="a" style="left:0;top:1858px;width:3078px;height:58px;background:#2B2D30"></div>
<div class="a" style="left:0;top:1856px;width:3078px;height:2px;background:#1E1F22"></div>
<svg style="left:28px;top:1876px" width="18" height="18" viewBox="0 0 18 18"><rect x="2" y="2" width="14" height="14" rx="3.5" fill="#25324D" stroke="#5A94F5" stroke-width="2.4"/></svg>
<div class="t" style="left:52px;top:1871px;font-size:28.3px;color:#A8ABB0;white-space:pre">androidify-main</div>
<svg style="left:266.0px;top:1876px" width="12" height="18" viewBox="0 0 12 18"><path d="M2 2 L9 9 L2 16" fill="none" stroke="#A8ABB0" stroke-width="2.2" stroke-linecap="round" stroke-linejoin="round"/></svg>
<svg style="left:428.0px;top:1876px" width="12" height="18" viewBox="0 0 12 18"><path d="M2 2 L9 9 L2 16" fill="none" stroke="#A8ABB0" stroke-width="2.2" stroke-linecap="round" stroke-linejoin="round"/></svg>
<svg style="left:570.6px;top:1876px" width="12" height="18" viewBox="0 0 12 18"><path d="M2 2 L9 9 L2 16" fill="none" stroke="#A8ABB0" stroke-width="2.2" stroke-linecap="round" stroke-linejoin="round"/></svg>
<svg style="left:656.6px;top:1876px" width="12" height="18" viewBox="0 0 12 18"><path d="M2 2 L9 9 L2 16" fill="none" stroke="#A8ABB0" stroke-width="2.2" stroke-linecap="round" stroke-linejoin="round"/></svg>
<svg style="left:788.4px;top:1876px" width="12" height="18" viewBox="0 0 12 18"><path d="M2 2 L9 9 L2 16" fill="none" stroke="#A8ABB0" stroke-width="2.2" stroke-linecap="round" stroke-linejoin="round"/></svg>
<svg style="left:886.7px;top:1876px" width="12" height="18" viewBox="0 0 12 18"><path d="M2 2 L9 9 L2 16" fill="none" stroke="#A8ABB0" stroke-width="2.2" stroke-linecap="round" stroke-linejoin="round"/></svg>
<svg style="left:988.6px;top:1876px" width="12" height="18" viewBox="0 0 12 18"><path d="M2 2 L9 9 L2 16" fill="none" stroke="#A8ABB0" stroke-width="2.2" stroke-linecap="round" stroke-linejoin="round"/></svg>
<svg style="left:1129.8px;top:1876px" width="12" height="18" viewBox="0 0 12 18"><path d="M2 2 L9 9 L2 16" fill="none" stroke="#A8ABB0" stroke-width="2.2" stroke-linecap="round" stroke-linejoin="round"/></svg>
<svg style="left:1315.5px;top:1876px" width="12" height="18" viewBox="0 0 12 18"><path d="M2 2 L9 9 L2 16" fill="none" stroke="#A8ABB0" stroke-width="2.2" stroke-linecap="round" stroke-linejoin="round"/></svg>
<svg style="left:1487.6px;top:1876px" width="12" height="18" viewBox="0 0 12 18"><path d="M2 2 L9 9 L2 16" fill="none" stroke="#A8ABB0" stroke-width="2.2" stroke-linecap="round" stroke-linejoin="round"/></svg>
<svg style="left:1606.0px;top:1876px" width="12" height="18" viewBox="0 0 12 18"><path d="M2 2 L9 9 L2 16" fill="none" stroke="#A8ABB0" stroke-width="2.2" stroke-linecap="round" stroke-linejoin="round"/></svg>
<svg style="left:1884.0px;top:1876px" width="12" height="18" viewBox="0 0 12 18"><path d="M2 2 L9 9 L2 16" fill="none" stroke="#A8ABB0" stroke-width="2.2" stroke-linecap="round" stroke-linejoin="round"/></svg>
<svg style="left:296.6px;top:1876px" width="18" height="18" viewBox="0 0 18 18"><rect x="2" y="2" width="14" height="14" rx="3.5" fill="#25324D" stroke="#5A94F5" stroke-width="2.4"/></svg>
<div class="t" style="left:320.7px;top:1871px;font-size:28px;color:#A8ABB0">feature</div>
<svg style="left:458.0px;top:1876px" width="18" height="18" viewBox="0 0 18 18"><rect x="2" y="2" width="14" height="14" rx="3.5" fill="#25324D" stroke="#5A94F5" stroke-width="2.4"/></svg>
<div class="t" style="left:482.0px;top:1871px;font-size:28px;color:#A8ABB0">home</div>
<div class="t" style="left:601.0px;top:1871px;font-size:28px;color:#A8ABB0">src</div>
<svg style="left:687.0px;top:1876px" width="18" height="18" viewBox="0 0 18 18"><rect x="2" y="2" width="14" height="14" rx="3.5" fill="#25324D" stroke="#5A94F5" stroke-width="2.4"/></svg>
<div class="t" style="left:711.0px;top:1871px;font-size:28px;color:#A8ABB0">main</div>
<div class="t" style="left:817.5px;top:1871px;font-size:28px;color:#A8ABB0">java</div>
<div class="t" style="left:917.0px;top:1871px;font-size:28px;color:#A8ABB0">com</div>
<div class="t" style="left:1019.0px;top:1871px;font-size:28px;color:#A8ABB0">android</div>
<div class="t" style="left:1160.0px;top:1871px;font-size:28px;color:#A8ABB0">developers</div>
<div class="t" style="left:1346.8px;top:1871px;font-size:28px;color:#A8ABB0">androidify</div>
<div class="t" style="left:1519.0px;top:1871px;font-size:28px;color:#A8ABB0">home</div>
<svg style="left:1640.0px;top:1872px" width="26" height="26" viewBox="0 0 26 26"><path d="M2 2 L24 2 L13 13 L24 24 L2 24 Z" fill="#2D2638" stroke="#B67EF0" stroke-width="2.4" stroke-linejoin="round"/></svg>
<div class="t" style="left:1676.5px;top:1871.5px;font-size:27.2px;color:#A8ABB0">HomeScreen.kt</div>
<svg style="left:1916.6px;top:1870px" width="28" height="30" viewBox="0 0 28 30"><g fill="none" stroke="#5A94F5" stroke-width="2.4" stroke-linejoin="round"><path d="M14 2 L26 8.5 L26 21.5 L14 28 L2 21.5 L2 8.5 Z"/><path d="M8 11.5 L14 8.5 L20 11.5 L20 18.5 L14 21.5 L8 18.5 Z M8 11.5 L14 14.5 L20 11.5 M14 14.5 L14 21.5"/></g></svg>
<div class="t" style="left:1954.6px;top:1871.5px;font-size:27.2px;color:#A8ABB0">CompactPager</div>
<div class="t" style="left:2491px;top:1871px;font-size:26.5px;color:#A8ABB0">255:1</div>
<div class="t" style="left:2588.6px;top:1871px;font-size:28px;color:#A8ABB0">LF</div>
<div class="t" style="left:2651px;top:1871px;font-size:27px;color:#A8ABB0">UTF-8</div>
<svg style="left:2763px;top:1870px" width="30" height="30" viewBox="0 0 30 30"><path d="M15 1 Q16.5 13.5 29 15 Q16.5 16.5 15 29 Q13.5 16.5 1 15 Q13.5 13.5 15 1 Z" fill="#CED0D6"/></svg>
<svg style="left:2831px;top:1869px" width="30" height="32" viewBox="0 0 30 32"><g fill="none" stroke="#CED0D6" stroke-width="2" stroke-linejoin="round"><path d="M11 28 L4 28 Q2 28 2 26 L2 8 L8 2 L17 2 Q19 2 19 4 L19 14"/><path d="M2 8 L8 8 L8 2"/></g><g fill="none" stroke="#CED0D6" stroke-width="2"><circle cx="20" cy="23" r="5.5"/><circle cx="20" cy="23" r="2"/></g></svg>
<div class="t" style="left:2867px;top:1871px;font-size:27.3px;color:#A8ABB0">4 spaces</div>
<svg style="left:3015px;top:1871px" width="30" height="28" viewBox="0 0 30 28"><g fill="none" stroke="#CED0D6" stroke-width="2.2" stroke-linejoin="round" stroke-linecap="round"><rect x="2" y="12" width="19" height="14" rx="2"/><path d="M14 12 L14 7 Q14 2 20 2 Q26 2 26 7 L26 10"/><path d="M11.5 16 L11.5 21"/></g></svg>

</div>
</body></html>
